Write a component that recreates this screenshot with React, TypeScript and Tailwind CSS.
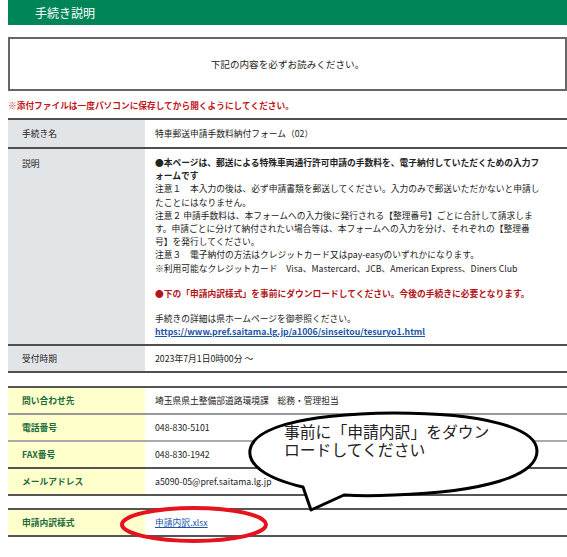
const FONT = "font-['Noto_Sans_CJK_JP','Noto_Sans',sans-serif]";

const CONTACTS = [
  { label: "問い合わせ先", value: "埼玉県県土整備部道路環境課　総務・管理担当", border: "border-[#555]" },
  { label: "電話番号", value: "048-830-5101", border: "border-[#999]" },
  { label: "FAX番号", value: "048-830-1942", border: "border-[#aaa]" },
  { label: "メールアドレス", value: "a5090-05@pref.saitama.lg.jp", border: "border-[#555]" }
];

function GrayRow({ label, children, pad = "py-[6px]" }: { label: string; children: React.ReactNode; pad?: string }) {
  return (
    <div className="flex border-t-2 border-[#4f4f4f]">
      <div className={`w-[137px] shrink-0 bg-[#e2e5e8] pl-[14px] text-[#222] ${pad}`}>{label}</div>
      <div className={`flex-1 pl-[10px] text-[#222] ${pad}`}>{children}</div>
    </div>
  );
}

function YellowRow({ label, children, border }: { label: string; children: React.ReactNode; border: string }) {
  return (
    <div className={`flex border-t-2 ${border}`}>
      <div className="w-[137px] shrink-0 bg-[#ffffcc] py-[6px] pl-[14px] font-bold text-[#1c6b3c]">{label}</div>
      <div className="flex-1 py-[6px] pl-[10px] text-[#222]">{children}</div>
    </div>
  );
}

function Bubble() {
  return (
    <div className="pointer-events-none absolute left-[244px] top-[406px] h-[112px] w-[300px]">
      <svg width="300" height="112" viewBox="0 0 300 112" className="absolute inset-0">
        <path
          d="M59 81 C20 72 4 58 6 44 C9 24 50 8 150 7 C240 7 293 22 293 45 C293 70 240 86 150 89 C130 90 115 90 100 89 L67 104 Z"
          fill="#fff"
          stroke="#000"
          strokeWidth="3"
          strokeLinejoin="round"
        />
      </svg>
      <div className="absolute left-[40px] top-[17px] whitespace-nowrap text-[15.8px] leading-[18px] text-[#222]">
        事前に「申請内訳」をダウン
        <br />
        ロードしてください
      </div>
    </div>
  );
}

export default function App() {
  return (
    <div className={`relative min-h-[557px] w-[567px] overflow-hidden bg-white ${FONT}`}>
      <div className="ml-2 w-[559px]">
        <div className="flex h-[25px] items-center bg-[#008558] pl-[27px] text-[12px] text-white">手続き説明</div>

        <div className="mt-3 flex h-[54px] items-center justify-center border-2 border-[#666] text-[9.6px] text-[#222]">
          下記の内容を必ずお読みください。
        </div>

        <p className="mt-[8px] whitespace-nowrap text-[8.7px] font-bold leading-[13px] text-[#c3171d]">
          ※添付ファイルは一度パソコンに保存してから開くようにしてください。
        </p>

        <div className="mt-[6px] border-b-2 border-[#4f4f4f] text-[8.75px] leading-[13px]">
          <GrayRow label="手続き名" pad="py-[7px]">特車郵送申請手数料納付フォーム（02）</GrayRow>
          <div className="flex border-t-2 border-[#4f4f4f]">
            <div className="w-[137px] shrink-0 bg-[#e2e5e8] pl-[14px] pt-[8px] text-[#222]">説明</div>
            <div className="flex-1 whitespace-nowrap pb-[6px] pl-[10px] pt-[7px] leading-[13.2px] text-[#222]">
              <p className="font-bold">
                ●本ページは、郵送による特殊車両通行許可申請の手数料を、電子納付していただくための入力フ
                <br />
                ォームです
              </p>
              <p>
                注意１　本入力の後は、必ず申請書類を郵送してください。入力のみで郵送いただかないと申請し
                <br />
                たことにはなりません。
                <br />
                注意２ 申請手数料は、本フォームへの入力後に発行される【整理番号】ごとに合計して請求しま
                <br />
                す。申請ごとに分けて納付されたい場合等は、本フォームへの入力を分け、それぞれの【整理番
                <br />
                号】を発行してください。
                <br />
                注意３　電子納付の方法はクレジットカード又はpay-easyのいずれかになります。
                <br />
                ※利用可能なクレジットカード　Visa、Mastercard、JCB、American Express、Diners Club
              </p>
              <p className="mt-[12px] font-bold text-[#b3151a]">
                ●下の「申請内訳様式」を事前にダウンロードしてください。今後の手続きに必要となります。
              </p>
              <p className="mt-[12px]">
                手続きの詳細は県ホームページを御参照ください。
                <br />
                <a href="#" className="font-bold text-[#1d55a8] underline">
                  https://www.pref.saitama.lg.jp/a1006/sinseitou/tesuryo1.html
                </a>
              </p>
            </div>
          </div>
          <GrayRow label="受付時期">2023年7月1日0時00分 ～</GrayRow>
        </div>

        <div className="mt-[13px] border-b-2 border-[#555] text-[8.75px] leading-[13px]">
          {CONTACTS.map((c) => (
            <YellowRow key={c.label} label={c.label} border={c.border}>
              {c.value}
            </YellowRow>
          ))}
        </div>

        <div className="mt-[12px] border-b-2 border-[#555] text-[8.75px] leading-[13px]">
          <YellowRow label="申請内訳様式" border="border-[#555]">
            <a href="#" className="text-[#1d55a8] underline">申請内訳.xlsx</a>
          </YellowRow>
        </div>
      </div>

      <Bubble />

      <svg width="156" height="42" viewBox="0 0 156 42" className="pointer-events-none absolute left-[117px] top-[504px]">
        <ellipse cx="77" cy="20.5" rx="72" ry="16.5" fill="none" stroke="#e3141e" strokeWidth="4" />
      </svg>
    </div>
  );
}
